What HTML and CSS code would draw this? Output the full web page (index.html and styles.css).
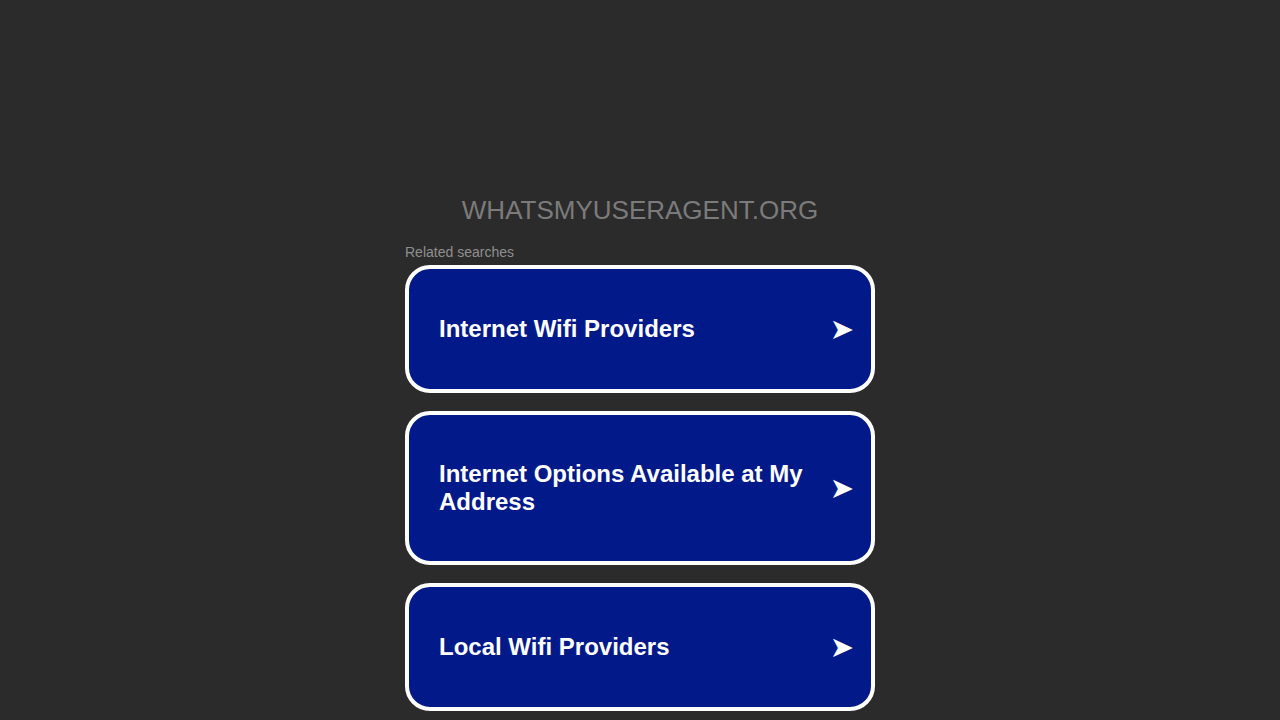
FILE: index.html
```html
<!DOCTYPE html>
<html lang="en">
<head>
<meta charset="utf-8">
<title>whatsmyuseragent.org</title>
<link rel="stylesheet" href="styles.css">
</head>
<body>
<div class="page">
  <h1 class="domain">WHATSMYUSERAGENT.ORG</h1>
  <div class="related">
    <p class="related-label">Related searches</p>
    <a class="card" href="#"><span class="card-text">Internet Wifi Providers</span><span class="card-arrow">➤</span></a>
    <a class="card" href="#"><span class="card-text">Internet Options Available at My Address</span><span class="card-arrow">➤</span></a>
    <a class="card" href="#"><span class="card-text">Local Wifi Providers</span><span class="card-arrow">➤</span></a>
  </div>
</div>
</body>
</html>
```

FILE: styles.css
```css
html, body {
  margin: 0;
  padding: 0;
  background: #2b2b2b;
  font-family: "Liberation Sans", Arial, sans-serif;
}
.page {
  display: flex;
  flex-direction: column;
  align-items: center;
  padding-top: 195px;
}
.domain {
  margin: 0;
  font-size: 26px;
  font-weight: normal;
  line-height: 30px;
  color: #7b7b7b;
}
.related {
  width: 470px;
  margin-top: 19px;
  display: flex;
  flex-direction: column;
  gap: 18px;
}
.related-label {
  margin: 0 0 -13px 0;
  font-size: 14px;
  line-height: 16px;
  color: #8f8f8f;
}
.card {
  display: flex;
  align-items: center;
  justify-content: space-between;
  gap: 20px;
  padding: 45px 17px 45px 30px;
  background: #021a89;
  border: 4px solid #ffffff;
  border-radius: 25px;
  text-decoration: none;
  color: #ffffff;
}
.card-text {
  font-size: 24px;
  font-weight: bold;
  line-height: 28px;
}
.card-arrow {
  font-family: "DejaVu Sans", sans-serif;
  font-size: 29px;
  line-height: 30px;
  color: #ffffff;
}
```
